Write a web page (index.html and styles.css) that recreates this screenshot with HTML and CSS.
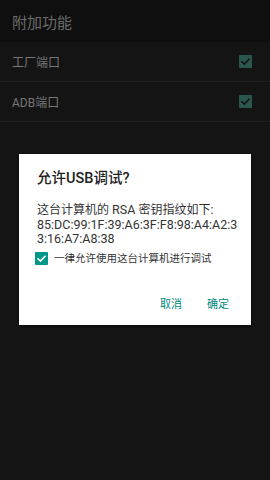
FILE: index.html
```html
<!DOCTYPE html>
<html lang="zh-CN">
<head>
<meta charset="utf-8">
<link rel="stylesheet" href="styles.css">
</head>
<body>
<div class="screen">
  <header class="bar">附加功能</header>
  <div class="row">
    <span class="label">工厂端口</span>
    <span class="check dim"><svg viewBox="0 0 13 13"><path d="M3 6.8 L5.4 9.1 L10 4.3" /></svg></span>
  </div>
  <div class="row">
    <span class="label">ADB端口</span>
    <span class="check dim"><svg viewBox="0 0 13 13"><path d="M3 6.8 L5.4 9.1 L10 4.3" /></svg></span>
  </div>

  <div class="dialog">
    <h1 class="title">允许USB调试?</h1>
    <p class="msg"><span class="han">这台计算机的</span> RSA <span class="han">密钥指纹如下</span>:<br>85:DC:99:1F:39:A6:3F:F8:98:A4:A2:3<br>3:16:A7:A8:38</p>
    <div class="opt">
      <span class="check on"><svg viewBox="0 0 13 13"><path d="M3 6.8 L5.4 9.1 L10 4.3" /></svg></span>
      <span class="opt-text">一律允许使用这台计算机进行调试</span>
    </div>
    <div class="actions">
      <span class="btn">取消</span>
      <span class="btn">确定</span>
    </div>
  </div>
</div>
</body>
</html>
```
FILE: styles.css
```css
html, body {
  margin: 0;
  padding: 0;
  background: #141414;
}
.screen {
  position: relative;
  width: 270px;
  height: 480px;
  background: #141414;
  font-family: Roboto, "Noto Sans CJK SC", sans-serif;
  overflow: hidden;
}
.bar {
  height: 42px;
  background: #0f0f0f;
  color: #6c6c6c;
  font-size: 15px;
  padding-left: 12px;
  display: flex;
  align-items: center;
  box-sizing: border-box;
}
.row {
  height: 39px;
  border-bottom: 1px solid #1e1e1e;
  display: flex;
  align-items: center;
  justify-content: space-between;
  padding: 0 18px 0 12px;
}
.label {
  color: #777;
  font-size: 12px;
}
.check {
  width: 13px;
  height: 13px;
  border-radius: 1px;
  display: inline-block;
  flex: none;
}
.check svg {
  display: block;
  width: 13px;
  height: 13px;
}
.check path {
  fill: none;
  stroke-width: 1.6;
  stroke-linecap: square;
}
.check.dim {
  background: #2b564f;
}
.check.dim path {
  stroke: #121212;
}
.check.on {
  background: #009688;
}
.check.on path {
  stroke: #fff;
}
.dialog {
  position: absolute;
  left: 19px;
  top: 154px;
  width: 232px;
  height: 171px;
  background: #fff;
  box-shadow: 0 1px 3px rgba(0,0,0,0.6);
  box-sizing: border-box;
  padding: 15px 8px 0 18px;
}
.title {
  margin: 0;
  font-size: 14.5px;
  font-weight: 500;
  color: #212121;
  line-height: 20px;
}
.msg {
  margin: 14px 0 0;
  font-size: 12.5px;
  line-height: 14.5px;
  color: #333;
}
.han {
  font-size: 12px;
}
.opt {
  display: flex;
  align-items: center;
  gap: 6px;
  margin-top: 3px;
  margin-left: -2px;
}
.opt-text {
  font-size: 10.5px;
  line-height: 17px;
  color: #333;
}
.actions {
  display: flex;
  justify-content: flex-end;
  gap: 25px;
  margin-top: 31px;
  padding-right: 14px;
}
.btn {
  color: #00897b;
  font-size: 11px;
  line-height: 14px;
}
```
